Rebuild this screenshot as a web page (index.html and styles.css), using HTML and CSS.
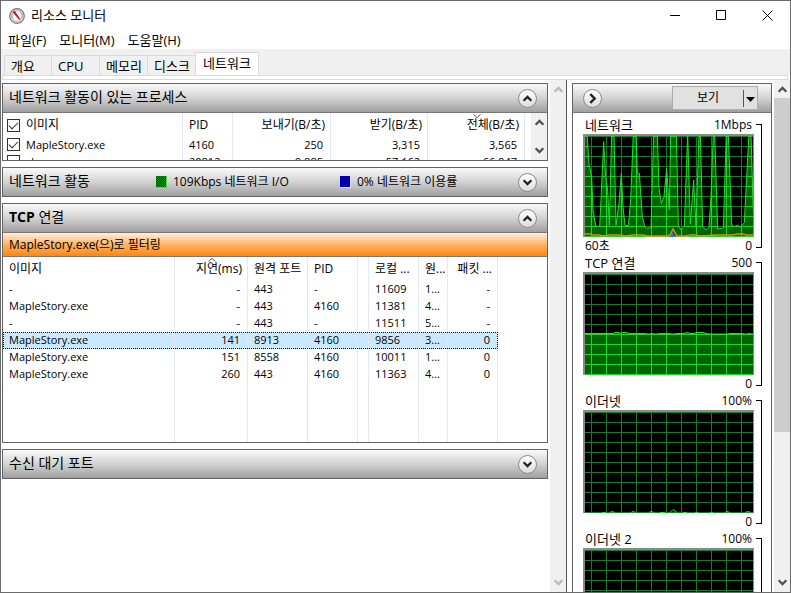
FILE: index.html
```html
<!DOCTYPE html>
<html lang="ko">
<head>
<meta charset="utf-8">
<title>리소스 모니터</title>
<link rel="stylesheet" href="styles.css">
</head>
<body>
<svg class="defs" width="0" height="0" aria-hidden="true">
  <defs>
    <pattern id="grid" x="6" y="10" width="15" height="10" patternUnits="userSpaceOnUse">
      <path d="M0 0h15v1h-14v9h-1z" fill="#1c7a2e"/>
    </pattern>
    <pattern id="grid-lit" x="6" y="10" width="15" height="10" patternUnits="userSpaceOnUse">
      <rect width="15" height="10" fill="#006400"/>
      <path d="M0 0h15v1h-14v9h-1z" fill="#22d32c"/>
    </pattern>
    <symbol id="up" viewBox="0 0 10 10"><path d="M1.500 7 5 3.500 8.500 7" fill="none" stroke="currentColor" stroke-width="2"/></symbol>
    <symbol id="down" viewBox="0 0 10 10"><path d="M1.500 3 5 6.500 8.500 3" fill="none" stroke="currentColor" stroke-width="2"/></symbol>
    <symbol id="next" viewBox="0 0 10 10"><path d="M3 1 7 5 3 9" fill="none" stroke="currentColor" stroke-width="2.200"/></symbol>
  </defs>
</svg>
<div class="window">
  <header class="titlebar">
    <svg class="app-icon" viewBox="0 0 16 16" aria-hidden="true">
      <circle cx="8" cy="8" r="7.300" fill="#dedede" stroke="#777" stroke-width="1.200"/>
      <circle cx="8" cy="8" r="5.300" fill="#fff" stroke="#b9b9b9" stroke-width="1"/>
      <path d="M4 11A5 5 0 0 1 4 5M11 4A5 5 0 0 1 12 11" fill="none" stroke="#d9a08c"/>
      <path d="m3.500 4 2.200-1.200L11.300 11 10.300 12z" fill="#c4141e"/>
    </svg>
    <h1>리소스 모니터</h1>
    <div class="caption">
      <button aria-label="최소화"><svg viewBox="0 0 11 11"><path d="M0 5.500h10" stroke="#000"/></svg></button>
      <button aria-label="최대화"><svg viewBox="0 0 11 11"><path d="M.5.5h9v9h-9z" fill="none" stroke="#000"/></svg></button>
      <button aria-label="닫기"><svg viewBox="0 0 11 11"><path d="m.5.5 10 10m0-10-10 10" stroke="#000"/></svg></button>
    </div>
  </header>
  <nav class="menu">
    <button>파일(F)</button><button>모니터(M)</button><button>도움말(H)</button>
  </nav>
  <div class="tabs" role="tablist">
    <button role="tab">개요</button><button role="tab">CPU</button><button role="tab">메모리</button><button role="tab">디스크</button><button role="tab" class="active" aria-selected="true">네트워크</button>
  </div>
  <div class="page-edge"></div>
  <main class="content">
    <div class="sections">
      <section class="panel">
        <div class="bar"><h2>네트워크 활동이 있는 프로세스</h2><button class="round" aria-label="접기"><svg><use href="#up"/></svg></button></div>
        <div class="processes">
          <div class="clip">
            <table class="proc-table">
              <colgroup><col class="c-name"><col class="c-pid"><col class="c-send"><col class="c-recv"><col class="c-recv"></colgroup>
              <thead><tr>
                <th><label><input type="checkbox" checked>이미지</label></th><th>PID</th><th class="num">보내기(B/초)</th><th class="num">받기(B/초)</th>
                <th class="num sorted">전체(B/초)<svg class="sort" viewBox="0 0 8 4"><path d="m.5.5 3.500 3 3.500-3" fill="none" stroke="#555"/></svg></th>
              </tr></thead>
              <tbody>
                <tr><td><label><input type="checkbox" checked>MapleStory.exe</label></td><td>4160</td><td class="num">250</td><td class="num">3,315</td><td class="num">3,565</td></tr>
                <tr><td><label><input type="checkbox">chrome.exe</label></td><td>20812</td><td class="num">9,885</td><td class="num">57,162</td><td class="num">66,947</td></tr>
              </tbody>
            </table>
          </div>
          <div class="scroll inner"><svg><use href="#up"/></svg><svg><use href="#down"/></svg></div>
        </div>
      </section>
      <section class="panel">
        <div class="bar activity"><h2>네트워크 활동</h2>
          <span class="legend io"><i class="swatch green"></i>109Kbps 네트워크 I/O</span>
          <span class="legend"><i class="swatch blue"></i>0% 네트워크 이용률</span>
          <button class="round" aria-label="펼치기"><svg><use href="#down"/></svg></button></div>
      </section>
      <section class="panel">
        <div class="bar"><h2><b>TCP</b> 연결</h2><button class="round" aria-label="접기"><svg><use href="#up"/></svg></button></div>
        <div class="filter">MapleStory.exe(으)로 필터링</div>
        <div class="connections">
          <table class="tcp-table">
            <colgroup><col class="t-name"><col class="t-lat"><col class="t-rport"><col class="t-pid"><col class="t-gap"><col class="t-pid"><col class="t-raddr"><col class="t-pid"></colgroup>
            <thead><tr>
              <th>이미지</th><th class="num sorted">지연(ms)<svg class="sort" viewBox="0 0 8 4"><path d="m.5 3.500 3.500-3 3.500 3" fill="none" stroke="#555"/></svg></th><th>원격 포트</th><th>PID</th><th></th><th>로컬 ...</th><th>원...</th><th class="num">패킷 ...</th>
            </tr></thead>
            <tbody>
              <tr><td>-</td><td class="num">-</td><td>443</td><td>-</td><td></td><td>11609</td><td>1...</td><td class="num">-</td></tr>
              <tr><td>MapleStory.exe</td><td class="num">-</td><td>443</td><td>4160</td><td></td><td>11381</td><td>4...</td><td class="num">-</td></tr>
              <tr><td>-</td><td class="num">-</td><td>443</td><td>-</td><td></td><td>11511</td><td>5...</td><td class="num">-</td></tr>
              <tr class="selected"><td>MapleStory.exe</td><td class="num">141</td><td>8913</td><td>4160</td><td></td><td>9856</td><td>3...</td><td class="num">0</td></tr>
              <tr><td>MapleStory.exe</td><td class="num">151</td><td>8558</td><td>4160</td><td></td><td>10011</td><td>1...</td><td class="num">0</td></tr>
              <tr><td>MapleStory.exe</td><td class="num">260</td><td>443</td><td>4160</td><td></td><td>11363</td><td>4...</td><td class="num">0</td></tr>
              <tr class="filler"><td></td><td></td><td></td><td></td><td></td><td></td><td></td><td></td></tr>
            </tbody>
          </table>
        </div>
      </section>
      <section class="panel">
        <div class="bar"><h2>수신 대기 포트</h2><button class="round" aria-label="펼치기"><svg><use href="#down"/></svg></button></div>
      </section>
    </div>
    <div class="scroll idle"><svg><use href="#up"/></svg><svg><use href="#down"/></svg></div>
    <aside class="side">
      <div class="panel graphs">
        <div class="bar"><button class="round" aria-label="숨기기"><svg><use href="#next"/></svg></button>
          <button class="view"><span>보기</span><svg viewBox="0 0 14 17"><path d="M.5 0v17" stroke="#555"/><path d="M3 7h9L7.500 12z"/></svg></button></div>
        <div class="graph-list">
          <figure>
            <div class="row head"><span class="name">네트워크</span><span>1Mbps</span></div>
            <svg class="plot" viewBox="0 0 168 101">
              <defs>
                <path id="net-area" transform="scale(.33333) translate(-60 -78)" d="M54 390V70H66L72 160 80 200 84 300 92 347 104 350 108 270 116 95 122 200 128 240 133 346 140 70H147L153 345 162 280 169 190 174 290 180 346 190 347 197 270 205 70H213L217 190H223L232 320 240 352 248 355 258 352 266 70H277L282 235 289 280 297 260 305 175 313 300 317 70H334L340 345 348 360 358 348 368 70 376 342 386 210 393 350 402 70H406L413 350 424 360 432 352 438 260 445 70H449L458 357 475 354 484 70H490L500 345 508 350 518 345 525 352 538 338 552 70H558L564 280 570 390z"/>
                <clipPath id="net"><use href="#net-area"/></clipPath>
              </defs>
              <rect width="168" height="101" fill="url(#grid)"/>
              <rect width="168" height="101" fill="url(#grid-lit)" clip-path="url(#net)"/>
              <use href="#net-area" fill="none" stroke="#22dd2c" stroke-width="3"/>
              <path d="M84 101l3-6 3 6z" fill="#2f6fd8"/>
              <path d="M0 98h6l1 1h8l2 1 8-1h10l5 1 8-1h10l4 1h20l3-1 3-6 4 7h9l4-1h6l4 1 18-1h14l6-1h5l3 1h7" fill="none" stroke="#e08a1c" stroke-width="1.500"/>
            </svg>
            <div class="row"><span>60초</span><span>0</span></div>
          </figure>
          <figure>
            <div class="row head"><span class="name">TCP 연결</span><span>500</span></div>
            <svg class="plot" viewBox="0 0 168 101">
              <rect width="168" height="101" fill="url(#grid)"/>
              <rect y="59" width="168" height="42" fill="url(#grid-lit)"/>
              <path d="M0 59.500h28l2-1h4l2 1 2-1h3l3 1h16l3 1 4-1 4 1 4-1h8l5 1 4-1h7l3-1 4 1h3l3-1h6l3 1 4 1h17l3-1h12l4 1 3-1 5 1 4-1h3" fill="none" stroke="#2be236"/>
            </svg>
            <div class="row"><span></span><span>0</span></div>
          </figure>
          <figure>
            <div class="row head"><span class="name">이더넷</span><span>100%</span></div>
            <svg class="plot" viewBox="0 0 168 101">
              <rect width="168" height="101" fill="url(#grid)"/>
              <path d="M17 100.500h4m4 0 2-1 3 1m16 0 2-1 3 1m13 0 2-1 3 1m6 0h5m5 0 3-3 4 3m6 0h4m8 0h3m12 0h3m12 0 2-1 3 1m15 0 3-1 3 1" fill="none" stroke="#2be236"/>
            </svg>
            <div class="row"><span></span><span>0</span></div>
          </figure>
          <figure>
            <div class="row head"><span class="name">이더넷 2</span><span>100%</span></div>
            <svg class="plot" viewBox="0 0 168 101"><rect width="168" height="101" fill="url(#grid)"/></svg>
            <div class="row"><span></span><span>0</span></div>
          </figure>
        </div>
      </div>
    </aside>
    <div class="scroll outer"><svg><use href="#up"/></svg><div class="thumb"></div><svg><use href="#down"/></svg></div>
  </main>
</div>
</body>
</html>
```
FILE: styles.css
```css
*, *::after { box-sizing: border-box; }
html, body { height: 100%; margin: 0; }
body {
  font: 12px/16px "Open Sans", "Noto Sans CJK KR", sans-serif;
  color: #000;
  background: #fff;
  overflow: hidden;
}
button { font: inherit; color: inherit; background: none; border: 0; padding: 0; margin: 0; }
h1, h2, figure { margin: 0; font-weight: 400; }
.defs { position: absolute; }

.window { height: 100vh; display: flex; flex-direction: column; border: 1px solid #6b6b6b; }

.titlebar { display: flex; align-items: center; height: 29px; flex: none; padding-left: 8px; }
.app-icon { width: 16px; height: 16px; margin-right: 6px; }
.titlebar h1 { font-size: 13px; padding-bottom: 2px; }
.caption { margin-left: auto; display: flex; }
.caption button { width: 46px; height: 29px; display: grid; place-items: center; }
.caption svg { width: 11px; height: 11px; }

.menu { display: flex; gap: 13px; height: 19px; flex: none; padding-left: 7px; font-size: 13px; }
.menu button { line-height: 20px; }

.tabs { display: flex; align-items: flex-end; height: 26px; flex: none; padding-left: 3px; background: #f0f0f0; font-size: 13px; }
.tabs button {
  width: 48px; height: 20px;
  padding-left: 6px;
  text-align: left;
  border: 1px solid #d9d9d9;
  border-width: 1px 1px 0 0;
  white-space: nowrap;
}
.tabs button:first-child { border-left-width: 1px; }
.tabs button.active { width: 64px; height: 23px; margin-left: -1px; padding: 0 0 3px 7px; background: #fff; border-left-width: 1px; }
.page-edge { height: 5px; flex: none; margin: 0 2px 0 1px; border: 1px solid #d9d9d9; background: #fff; }

.content { flex: 1; min-height: 0; display: flex; }
.sections { flex: 1; min-width: 0; padding: 3px 2px 0 1px; display: flex; flex-direction: column; gap: 6px; overflow: hidden; }
.panel { border: 1px solid #636363; flex: none; background: #fff; }
.bar {
  height: 28px;
  display: flex; align-items: center;
  padding: 0 10px 0 6px;
  background: linear-gradient(#fafafa, #d2d2d2 50%, #9f9f9f);
}
.bar h2 { font-size: 14px; line-height: 20px; padding-bottom: 2px; }
.round {
  width: 19px; height: 19px;
  display: grid; place-items: center;
  border: 1px solid #8a8a8a; border-radius: 50%;
  background: linear-gradient(#fff, #dcdcdc);
  color: #222;
  margin-left: auto;
}
.round svg, .scroll svg { width: 11px; height: 11px; }
.activity h2 { width: 147px; }
.legend { display: flex; align-items: center; gap: 6px; }
.legend.io { width: 184px; }
.swatch { width: 11px; height: 12px; border: 1px solid; border-width: 0 1px 1px 0; }
.green { background: repeating-conic-gradient(#0b4d0b 0 25%, #148c1b 0 50%) 0 0 / 2px 2px; border-color: #4be04b; }
.blue { background: #0000b0; border-color: #e0e0ff; }

.processes { display: flex; height: 48px; border-top: 1px solid #777; overflow: hidden; }
.clip { flex: 1; overflow: hidden; }
table { border-collapse: separate; border-spacing: 0; table-layout: fixed; }
th, td { padding: 0 6px; text-align: left; font-weight: 400; white-space: nowrap; border-right: 1px solid #e3e8ee; }
th { height: 24px; font-size: 12px; line-height: 16px; }
td { height: 17px; font-size: 11px; line-height: 15px; padding-bottom: 2px; }
.num { text-align: right; }
th.num { padding-right: 5px; }
td.num { padding-right: 7px; }
label { display: flex; align-items: center; gap: 6px; }
th:first-child label, td:first-child label { margin-left: -2px; }
input[type="checkbox"] {
  appearance: none;
  width: 13px; height: 13px; margin: 0;
  border: 1px solid #333; background: #fff;
}
input[type="checkbox"]:checked::after {
  content: "";
  display: block;
  width: 9px; height: 5px;
  margin: 2px 0 0 1px;
  border: solid #333; border-width: 0 0 1px 1px;
  transform: rotate(-45deg);
}
.sorted { position: relative; }
.sort { position: absolute; top: 1px; right: 43px; width: 8px; height: 4px; }
.tcp-table .sort { right: 31px; }

.proc-table { width: 522px; }
.c-name { width: 180px; }
.c-pid { width: 50px; }
.c-send { width: 98px; }
.c-recv { width: 97px; }

.filter {
  height: 25px;
  padding-left: 6px;
  line-height: 23px;
  border: solid #777; border-width: 1px 0;
  background: linear-gradient(#ffeedd, #ffb366 50%, #ff870f);
}
.connections { min-height: 185px; }
.tcp-table { width: 495px; }
.t-name { width: 172px; }
.t-lat { width: 73px; }
.t-rport { width: 60px; }
.t-pid { width: 50px; }
.t-gap { width: 11px; }
.t-raddr { width: 29px; }
.filler td { height: 59px; }
.selected td { background: #cce8ff; }
.selected { outline: 1px dotted #000; outline-offset: -1px; }

.scroll {
  width: 16px; flex: none;
  display: flex; flex-direction: column; justify-content: space-between; align-items: center;
  padding: 4px 0;
  background: #f0f0f0;
  color: #505050;
}
.scroll.idle { color: #b9b9b9; }
.thumb { width: 100%; flex: none; height: 334px; margin: 3px 0 auto; background: #cdcdcd; }

.side { width: 208px; flex: none; padding: 3px 2px 0 5px; border-left: 1px solid #555; overflow: hidden; }
.graphs .bar { padding: 0 13px 0 10px; border-bottom: 1px solid #777; height: 29px; }
.graphs .round { margin: 0; }
.view {
  width: 86px; height: 24px;
  margin-left: auto;
  display: flex; align-items: center;
  background: #e1e1e1; border: 1px solid #adadad;
}
.view span { flex: 1; }
.view svg { width: 14px; height: 17px; }
.graph-list { padding: 2px 9px 0 10px; }
figure { position: relative; padding-right: 8px; }
figure::after {
  content: "";
  position: absolute;
  top: 9px; right: 0;
  width: 6px; height: 124px;
  border: 1px solid #000; border-left: 0;
}
.row { display: flex; justify-content: space-between; height: 16px; line-height: 18px; padding: 0 2px; }
.row.head { height: 19px; line-height: 20px; }
.name { font-size: 13px; }
.plot { display: block; width: 171px; height: 103px; border: solid #8a8a8a; border-width: 2px 1px 0 2px; background: #000; }
```
